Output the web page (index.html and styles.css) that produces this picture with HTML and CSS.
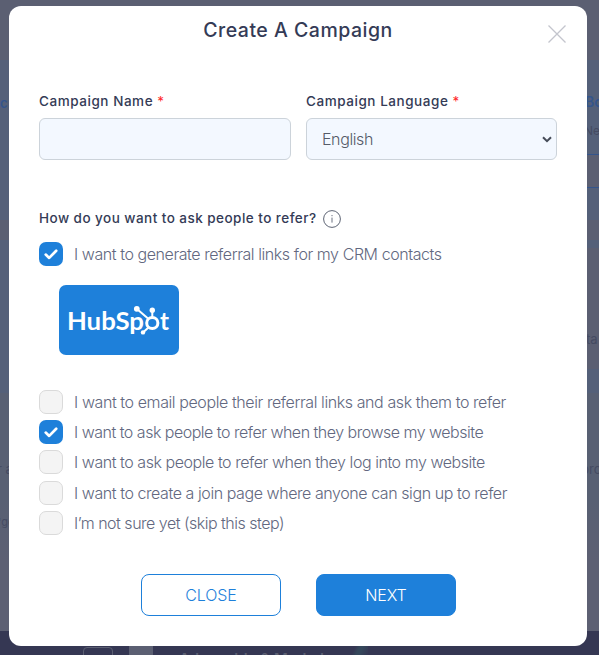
FILE: index.html
```
<!DOCTYPE html>
<html lang="en">
<head>
  <meta charset="UTF-8" />
  <title>Create A Campaign</title>
  <link rel="stylesheet" href="styles.css">
</head>
<body>

  <!-- dimmed page behind the modal -->
  <div class="backdrop">
    <span class="peek peek-c">c</span>
    <span class="peek peek-bo">Bo</span>
    <span class="peek peek-ne">Ne</span>
    <span class="peek-box"></span>
    <span class="peek peek-ta">ta</span>
    <span class="peek peek-ra">r a</span>
    <span class="peek peek-pro">pro</span>
    <span class="peek peek-ge">'ge</span>
    <div class="footer-bar">
      <span class="footer-box"></span>
      <span class="footer-block"></span>
      <span class="footer-text">Advocable &amp; Marketer</span>
      <span class="footer-glow"></span>
    </div>
  </div>

  <div class="modal">
    <header class="modal-header">
      <h1>Create A Campaign</h1>
      <button class="modal-x" aria-label="Close">
        <svg width="18" height="18" viewBox="0 0 18 18"><path d="M.5 .5l17 17M17.5 .5l-17 17" stroke="#c3c5cd" stroke-width="1.3" fill="none"/></svg>
      </button>
    </header>

    <div class="fields">
      <div class="field">
        <label for="name">Campaign Name <span class="required">*</span></label>
        <input id="name" type="text">
      </div>
      <div class="field">
        <label for="language">Campaign Language <span class="required">*</span></label>
        <div class="select">
          <span>English</span>
          <svg width="10" height="7" viewBox="0 0 10 7"><path d="M1 1.2l4 4 4-4" stroke="#454b58" stroke-width="2" fill="none"/></svg>
        </div>
      </div>
    </div>

    <div class="question">
      <span>How do you want to ask people to refer?</span>
      <svg width="18" height="18" viewBox="0 0 18 18" fill="none"><circle cx="9" cy="9" r="8.4" stroke="#5d6474"/><path d="M9 7.6v5M9 5v1.2" stroke="#6b7180"/></svg>
    </div>

    <div class="option">
      <span class="check checked"><svg width="14" height="11" viewBox="0 0 14 11"><path d="M1.7 5.6l3.5 3.3 7-7.1" stroke="#fff" stroke-width="2.7" stroke-linecap="round" stroke-linejoin="round" fill="none"/></svg></span>
      <span class="text text-crm">I want to generate referral links for my CRM contacts</span>
    </div>

    <div class="crm">
      <svg width="120" height="70" viewBox="0 0 120 70" fill="none">
        <g fill="#fff" font-family="Lato, sans-serif" font-weight="700" font-size="25">
          <text x="8" y="45" textLength="77" lengthAdjust="spacingAndGlyphs">HubSp</text>
          <text x="101" y="45" textLength="9" lengthAdjust="spacingAndGlyphs">t</text>
        </g>
        <circle cx="93.300" cy="38" r="5.600" stroke="#fff" stroke-width="3"/>
        <path d="M89 33.500L78 24M93.300 32v-7M89.500 42.500L84 47.500" stroke="#fff" stroke-width="2"/>
        <g fill="#fff"><circle cx="77.800" cy="23.800" r="2.900"/><circle cx="93.300" cy="25.300" r="2.700"/><circle cx="84" cy="47.400" r="2.200"/></g>
      </svg>
    </div>

    <div class="options">
      <div class="option">
        <span class="check"></span>
        <span class="text text-email">I want to email people their referral links and ask them to refer</span>
      </div>
      <div class="option">
        <span class="check checked"><svg width="14" height="11" viewBox="0 0 14 11"><path d="M1.7 5.6l3.5 3.3 7-7.1" stroke="#fff" stroke-width="2.7" stroke-linecap="round" stroke-linejoin="round" fill="none"/></svg></span>
        <span class="text text-browse">I want to ask people to refer when they browse my website</span>
      </div>
      <div class="option">
        <span class="check"></span>
        <span class="text text-login">I want to ask people to refer when they log into my website</span>
      </div>
      <div class="option">
        <span class="check"></span>
        <span class="text text-join">I want to create a join page where anyone can sign up to refer</span>
      </div>
      <div class="option">
        <span class="check"></span>
        <span class="text text-skip">I’m not sure yet (skip this step)</span>
      </div>
    </div>

    <div class="actions">
      <button class="btn btn-outline">CLOSE</button>
      <button class="btn btn-primary">NEXT</button>
    </div>
  </div>

</body>
</html>
```
FILE: styles.css
```
* {
  box-sizing: border-box;
}

body {
  margin: 0;
  height: 655px;
  padding: 6px 12px 0 9px;
  overflow: hidden;
  font-family: Inter, "Open Sans", sans-serif;
}

/* page behind */
.backdrop {
  position: absolute;
  inset: 0;
  overflow: hidden;
  background: linear-gradient(#5b5f72 60px, #546079 60px, #546079 220px, #5b5f72 220px, #5b5f72 240px, #546079 240px, #546079 393px, #586073 393px, #586073 500px, #5d6073 560px, #5d6073);
}

.backdrop::after {
  content: "";
  position: absolute;
  top: 248px;
  right: 0;
  width: 13px;
  height: 121px;
  background: #5b5f72;
}

.peek {
  position: absolute;
  z-index: 1;
  font-size: 13px;
  line-height: 16px;
  color: #454b62;
}

.peek-c { left: 0; top: 95px; font-weight: 600; color: #34558c; }
.peek-bo { left: 585px; top: 94px; font-weight: 600; font-size: 14px; color: #34558c; }
.peek-ne { left: 584px; top: 123px; font-size: 12px; }
.peek-ta { left: 586px; top: 331px; }
.peek-ra { left: -3px; top: 461px; }
.peek-pro { left: 581px; top: 461px; }
.peek-ge { left: -2px; top: 514px; font-size: 11px; }

.peek-box {
  position: absolute;
  left: 580px;
  top: 154px;
  width: 30px;
  height: 34px;
  border: 1px solid #34558c;
  background: #5b5f72;
}

.footer-bar {
  position: absolute;
  left: 0;
  right: 0;
  top: 631px;
  height: 24px;
  background: #353753;
}

.footer-box {
  position: absolute;
  left: 83px;
  top: 16px;
  width: 30px;
  height: 20px;
  border: 1px solid #5b5f72;
  border-radius: 4px;
}

.footer-block {
  position: absolute;
  left: 129px;
  top: 10px;
  width: 24px;
  height: 14px;
  background: #5b5f72;
}

.footer-text {
  position: absolute;
  left: 179px;
  top: 19px;
  font-size: 15px;
  font-weight: 600;
  line-height: 18px;
  color: #5b5f72;
}

.footer-glow {
  position: absolute;
  left: 350px;
  top: 15px;
  width: 18px;
  height: 9px;
  background: linear-gradient(115deg, #353753 25%, #35475b 45%, #35475b 60%, #353753);
}

/* modal */
.modal {
  position: relative;
  z-index: 2;
  height: 640px;
  padding: 0 30px;
  border-radius: 12px;
  background: #fff;
  color: #343b56;
}

.modal-header {
  display: flex;
  justify-content: center;
  height: 84px;
  padding-top: 11px;
}

h1 {
  margin: 0;
  font-size: 19.5px;
  font-weight: 500;
  line-height: 26px;
  letter-spacing: 0.5px;
}

.modal-x {
  position: absolute;
  top: 19px;
  right: 21px;
  width: 18px;
  height: 18px;
  padding: 0;
  border: 0;
  background: none;
}

.modal-x svg {
  display: block;
}

.fields {
  display: grid;
  grid-template-columns: 252px 251px;
  gap: 15px;
}

.field label {
  display: block;
  height: 28px;
  font-size: 13.5px;
  font-weight: 500;
  line-height: 22px;
  letter-spacing: 0.55px;
  white-space: nowrap;
}

.required {
  color: #ff2b2b;
  font-weight: 400;
}

.field input,
.select {
  display: flex;
  align-items: center;
  justify-content: space-between;
  width: 100%;
  height: 42px;
  padding: 0 4px 0 15px;
  border: 1px solid #ccd3da;
  border-radius: 6px;
  background: #f3f8ff;
  color: #555b68;
  font-size: 16px;
  font-weight: 300;
  letter-spacing: -0.4px;
}

.question {
  display: flex;
  align-items: center;
  gap: 6px;
  height: 22px;
  margin-top: 48px;
  font-size: 13.5px;
  font-weight: 500;
  white-space: nowrap;
  letter-spacing: 0.46px;
}

.question span {
  padding-bottom: 2px;
}

.option {
  display: flex;
  align-items: center;
  gap: 11px;
  height: 24px;
  color: #626880;
}

.question + .option {
  margin-top: 12px;
}

.check {
  display: flex;
  flex: none;
  align-items: center;
  justify-content: center;
  width: 24px;
  height: 24px;
  border: 1px solid #dadada;
  border-radius: 7px;
  background: #f4f4f4;
}

.check.checked {
  border: 0;
  background: #1e80da;
}

.text {
  font-size: 16px;
  font-weight: 300;
  line-height: 24px;
  white-space: nowrap;
}

.text-crm { letter-spacing: -0.43px; }
.text-email { letter-spacing: -0.41px; }
.text-browse { letter-spacing: -0.5px; }
.text-login { letter-spacing: -0.45px; }
.text-join { letter-spacing: -0.43px; }
.text-skip { letter-spacing: -0.5px; }

.crm {
  width: 120px;
  height: 70px;
  margin: 19px 0 34.8px 20px;
  border-radius: 7px;
  background: #1e80da;
}

.crm svg {
  display: block;
}

.options {
  display: flex;
  flex-direction: column;
  gap: 6.3px;
}

.actions {
  display: flex;
  gap: 35px;
  margin: 39px 0 0 102px;
}

.btn {
  width: 140px;
  height: 42px;
  padding: 0;
  border: 1px solid #1e80da;
  border-radius: 8px;
  font-family: inherit;
  font-size: 16px;
  font-weight: 300;
  letter-spacing: -0.1px;
}

.btn-outline {
  background: #fff;
  color: #1e80da;
}

.btn-primary {
  background: #1e80da;
  color: #fff;
}
```
